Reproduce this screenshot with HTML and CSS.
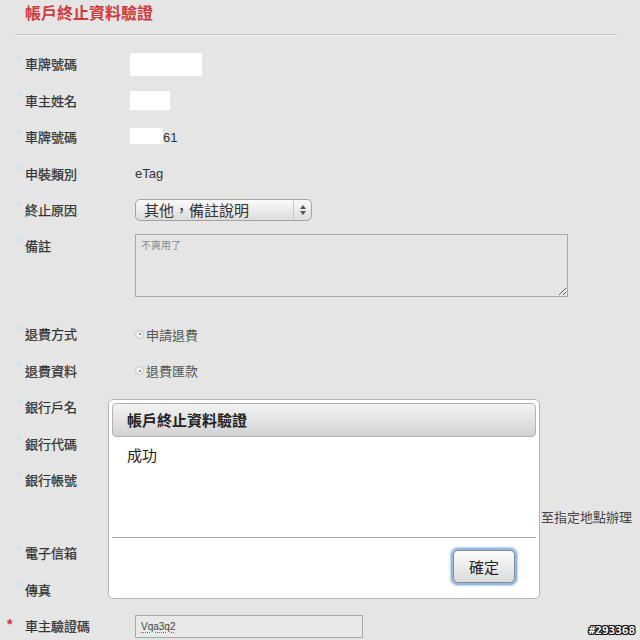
FILE: index.html
```html
<!DOCTYPE html>
<html lang="zh-Hant">
<head>
    <meta charset="UTF-8">
    <title>帳戶終止資料驗證</title>
    <link rel="stylesheet" href="styles.css">
</head>
<body>
<div class="page">
    <h2 class="title">帳戶終止資料驗證</h2>
    <div class="rule"></div>
    <ul class="form">
        <li class="row"><span class="lbl">車牌號碼</span><div class="val"><span class="mask mask-1"></span></div></li>
        <li class="row"><span class="lbl">車主姓名</span><div class="val"><span class="mask mask-2"></span></div></li>
        <li class="row"><span class="lbl">車牌號碼</span><div class="val"><span class="mask mask-3"></span>61</div></li>
        <li class="row"><span class="lbl">申裝類別</span><div class="val">eTag</div></li>
        <li class="row"><span class="lbl">終止原因</span>
            <div class="select">
                <span class="select-text">其他，備註說明</span>
                <span class="select-arrow">
                    <svg width="8" height="12" viewBox="0 0 8 12"><path d="M4 1 L7 5 H1 Z" fill="#555"/><path d="M4 11 L7 7 H1 Z" fill="#555"/></svg>
                </span>
            </div>
        </li>
        <li class="row row-tall"><span class="lbl">備註</span><textarea class="memo" readonly>不爽用了</textarea></li>
        <li class="row"><span class="lbl">退費方式</span><div class="val radio-val"><span class="radio"></span>申請退費</div></li>
        <li class="row"><span class="lbl">退費資料</span><div class="val radio-val"><span class="radio"></span>退費匯款</div></li>
        <li class="row"><span class="lbl">銀行戶名</span></li>
        <li class="row"><span class="lbl">銀行代碼</span></li>
        <li class="row"><span class="lbl">銀行帳號</span></li>
        <li class="row row-note">至指定地點辦理</li>
        <li class="row"><span class="lbl">電子信箱</span></li>
        <li class="row"><span class="lbl">傳真</span></li>
        <li class="row"><span class="lbl req">車主驗證碼</span><div class="code"><span class="typo">Vqa3q2</span></div></li>
    </ul>

    <div class="dialog">
        <div class="dialog-bar">帳戶終止資料驗證</div>
        <div class="dialog-body">成功</div>
        <div class="dialog-foot"><a class="btn" href="javascript:;">確定</a></div>
    </div>

    <div class="stamp">#293368</div>
</div>
</body>
</html>
```

FILE: styles.css
```css
*{
    margin : 0;
    padding: 0;
}
ul{
    list-style-type: none;
}
a{
    color: #222;
    outline: none;
    text-decoration: none;
}
body{
    background: #e5e5e5;
    color: #333;
    font: 13px/1.5 "Liberation Sans", "Noto Sans CJK TC", sans-serif;
}
.page{
    position: relative;
    width: 640px;
    height: 640px;
    overflow: hidden;
}
.title{
    height: 22px;
    padding: 2px 0 0 25px;
    color: #cf3a40;
    font: 700 16px/20px "Noto Sans CJK TC", sans-serif;
}
.rule{
    width: 604px;
    height: 1px;
    margin: 10px 0 0 14px;
    background: #c4c4c4;
    border-bottom: 1px solid #f2f2f2;
}
.form{
    margin-top: 10px;
}
.row{
    display: flex;
    align-items: center;
    height: 36.5px;
}
.lbl{
    flex: none;
    width: 135px;
    padding-left: 17px;
    box-sizing: border-box;
    color: #333;
    font: 13px/24px "Noto Sans CJK TC", sans-serif;
    -webkit-text-stroke: 0.25px #333;
}
.lbl::before{
    content: "";
    display: inline-block;
    width: 4px;
    height: 4px;
    margin: 4px 4px 0 0;
    vertical-align: top;
    border-radius: 50%;
    background: #c7e2ea;
    -webkit-text-stroke: 0;
}
.lbl.req{
    padding-left: 7px;
}
.lbl.req::before{
    content: "*";
    width: 18px;
    height: auto;
    margin: 0;
    background: none;
    color: #cc3333;
    font: 700 14px/20px "Liberation Sans", sans-serif;
}
.val{
    display: flex;
    align-items: center;
    color: #333;
    font-size: 13px;
}
.mask{
    display: inline-block;
    margin-left: -5px;
    background: #fff;
}
.mask-1{
    width: 72px;
    height: 23px;
}
.mask-2{
    width: 40px;
    height: 19px;
}
.mask-3{
    width: 33px;
    height: 16px;
    margin-top: -3px;
}
.select{
    display: flex;
    align-items: center;
    width: 177px;
    height: 22px;
    box-sizing: border-box;
    border: 1px solid #a3a3a3;
    border-radius: 5px;
    background: linear-gradient(#fafafa, #dcdcdc);
}
.select-text{
    flex: 1;
    padding-left: 8px;
    color: #333;
    font: 15px/20px "Noto Sans CJK TC", sans-serif;
}
.select-arrow{
    display: flex;
    align-items: center;
    justify-content: center;
    width: 17px;
    height: 100%;
    border-left: 1px solid #c8c8c8;
}
.row-tall{
    height: 87.5px;
    align-items: flex-start;
    padding-top: 5.5px;
    box-sizing: border-box;
}
.memo{
    width: 433px;
    height: 63px;
    box-sizing: border-box;
    padding: 3px 5px;
    border: 1px solid #a9a9a9;
    background: transparent;
    color: #888;
    font: 10px/14px "Noto Sans CJK TC", sans-serif;
    outline: none;
}
.radio-val{
    color: #555;
    font: 13px "Noto Sans CJK TC", sans-serif;
}
.radio{
    display: flex;
    align-items: center;
    justify-content: center;
    width: 7px;
    height: 7px;
    margin: 0 2px 0 0;
    border: 1px solid #c4c4c4;
    border-radius: 50%;
    background: #f2f2f2;
}
.radio::after{
    content: "";
    width: 2px;
    height: 2px;
    border-radius: 50%;
    background: #777;
}
.row-note{
    justify-content: flex-end;
    padding-right: 8px;
    color: #444;
    font: 13px "Noto Sans CJK TC", sans-serif;
}
.code{
    width: 228px;
    height: 23px;
    box-sizing: border-box;
    padding-left: 5px;
    border: 1px solid #a8a8a8;
    background: #e8e8e8;
    font: 10px/21px "Liberation Sans", sans-serif;
    color: #444;
}
.typo{
    text-decoration: underline dotted #d04040;
    text-underline-offset: 2px;
}

/* dialog */
.dialog{
    position: absolute;
    left: 108px;
    top: 399px;
    width: 432px;
    height: 200px;
    box-sizing: border-box;
    display: flex;
    flex-direction: column;
    padding: 3px;
    border: 1px solid #b5b5b5;
    border-radius: 5px;
    background: #fff;
}
.dialog-bar{
    height: 34px;
    box-sizing: border-box;
    padding-left: 14px;
    border: 1px solid #b2b2b2;
    border-radius: 4px;
    background: linear-gradient(#f3f3f3, #d2d2d2);
    color: #222;
    font: 700 15px/32px "Noto Sans CJK TC", sans-serif;
}
.dialog-body{
    flex: 1;
    padding: 7px 15px 0;
    color: #222;
    font: 15px/22px "Noto Sans CJK TC", sans-serif;
}
.dialog-foot{
    display: flex;
    justify-content: flex-end;
    height: 58px;
    box-sizing: border-box;
    padding: 12px 21px 0 0;
    border-top: 1px solid #a8a8a8;
}
.btn{
    width: 62px;
    height: 33px;
    box-sizing: border-box;
    border: 1px solid #8a8a8a;
    border-radius: 5px;
    background: linear-gradient(#fdfdfd, #dadada);
    box-shadow: 0 0 0 2px #93b8e2, 0 0 2px 3px #b6d0ee;
    text-align: center;
    font: 15px/31px "Noto Sans CJK TC", sans-serif;
}

.stamp{
    position: absolute;
    right: 5px;
    bottom: 2px;
    color: #fff;
    font: 700 11px/14px "DejaVu Sans Mono", monospace;
    text-shadow: 1px 0 #111, -1px 0 #111, 0 1px #111, 0 -1px #111, 1px 1px #111, -1px -1px #111, 1px -1px #111, -1px 1px #111;
}
```
